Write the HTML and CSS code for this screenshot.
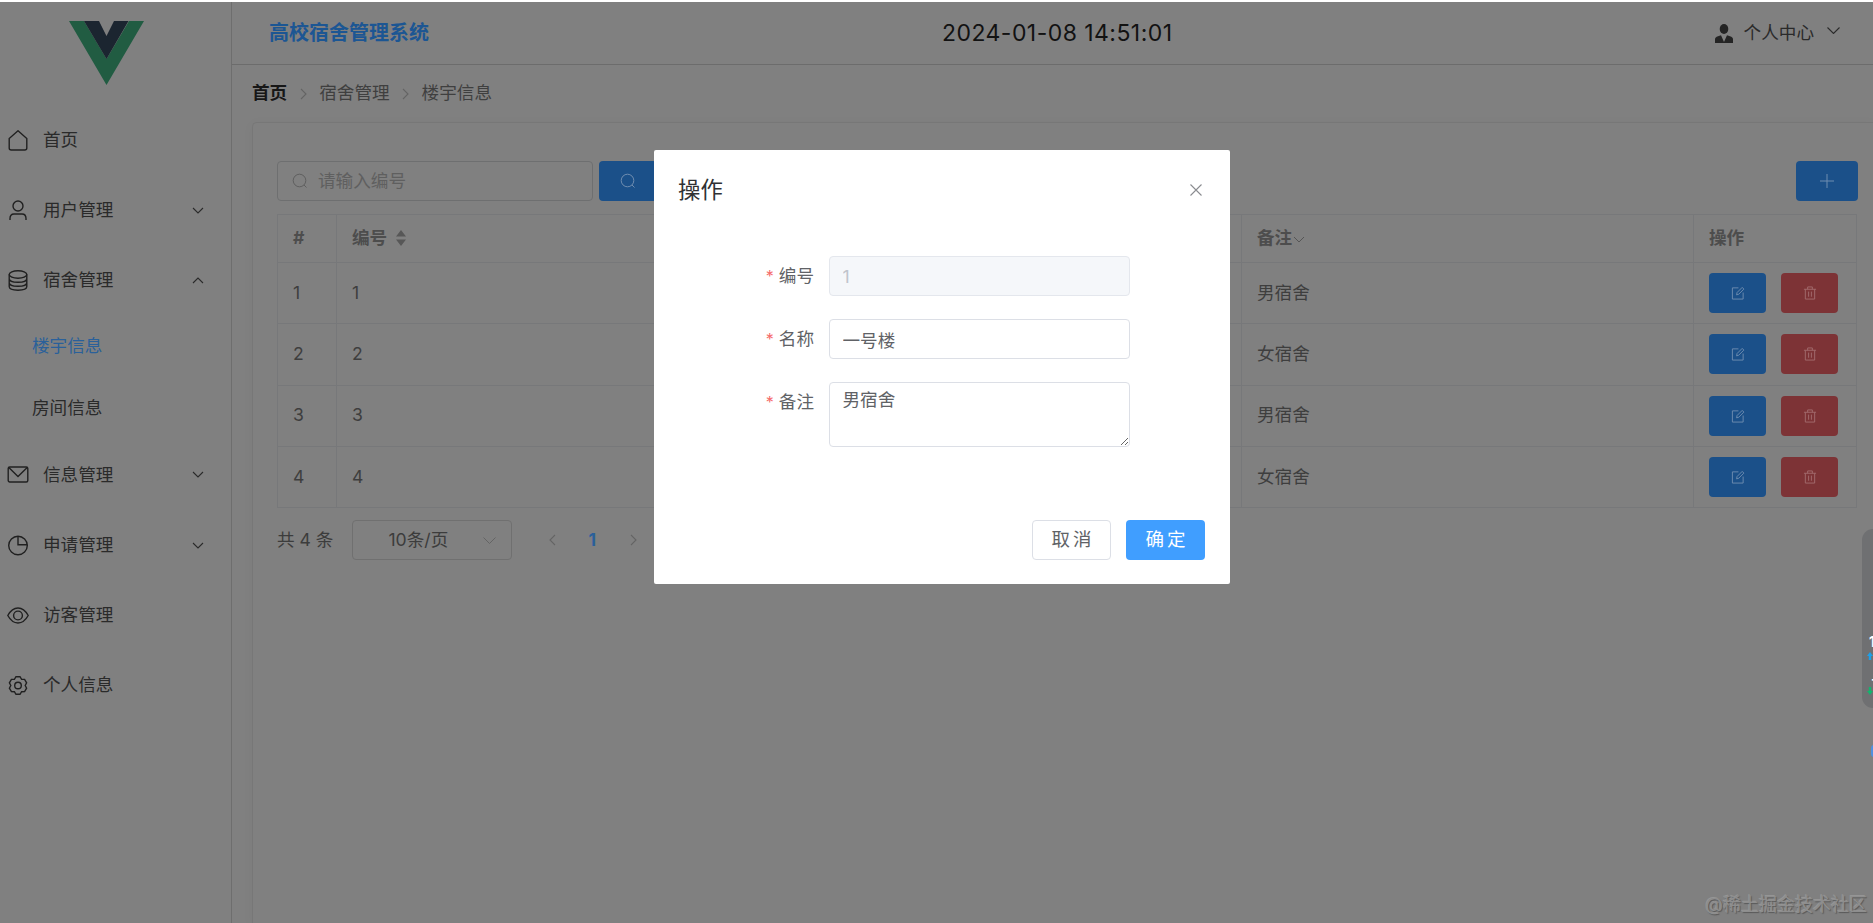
FILE: index.html
```html
<!DOCTYPE html>
<html lang="zh-CN">
<head>
<meta charset="utf-8">
<title>高校宿舍管理系统</title>
<link rel="stylesheet" href="styles.css">
</head>
<body>
<div class="app">
  <aside class="sidebar">
    <div class="logo">
      <svg width="75" height="64" viewBox="0 0 75 64"><path class="v-green" d="M0 0H15L37.5 38 60 0H75L37.5 64Z"/><path class="v-dark" d="M15 0H30L37.5 15 45 0H59.5L37.5 38Z"/></svg>
    </div>
    <nav class="menu">
      <a class="item"><svg class="ico" viewBox="0 0 22 21"><path d="M11 .8 19.800 8.500V18Q19.800 20 17.800 20H4.200Q2.200 20 2.200 18V8.500Z"/></svg><span>首页</span></a>
      <a class="item"><svg class="ico" viewBox="0 0 22 21"><circle cx="11" cy="6" r="5"/><path d="M3 20V18.500Q3 14 7 14H15Q19 14 19 18.500V20"/></svg><span>用户管理</span><svg class="chev" viewBox="0 0 12 7"><path d="M1 1 6 6 11 1"/></svg></a>
      <a class="item"><svg class="ico" viewBox="0 0 22 21"><ellipse cx="11" cy="4.500" rx="8.800" ry="3.700"/><path d="M2.200 4.500V16.500Q2.200 20.200 11 20.200T19.800 16.500V4.500M2.200 8.500Q2.200 12.300 11 12.300T19.800 8.500M2.200 12.500Q2.200 16.300 11 16.300T19.800 12.500"/></svg><span>宿舍管理</span><svg class="chev" viewBox="0 0 12 7"><path d="M1 6 6 1 11 6"/></svg></a>
      <a class="sub active">楼宇信息</a>
      <a class="sub">房间信息</a>
      <a class="item"><svg class="ico" viewBox="0 0 22 21"><rect x="1.200" y="3" width="19.600" height="15" rx="1.500"/><path d="M1.800 3.500 11 12.500 20.200 3.500"/></svg><span>信息管理</span><svg class="chev" viewBox="0 0 12 7"><path d="M1 1 6 6 11 1"/></svg></a>
      <a class="item"><svg class="ico" viewBox="0 0 22 21"><circle cx="11" cy="10.500" r="9.300"/><path d="M11 1.200V9.800H20.200"/></svg><span>申请管理</span><svg class="chev" viewBox="0 0 12 7"><path d="M1 1 6 6 11 1"/></svg></a>
      <a class="item"><svg class="ico" viewBox="0 0 22 21"><path d="M.8 10.500Q5 3 11 3T21.200 10.500Q17 18 11 18T.8 10.500Z"/><circle cx="11" cy="10.500" r="4.400"/></svg><span>访客管理</span></a>
      <a class="item"><svg class="ico" viewBox="-1 -.5 22 21"><polygon points="7.980,1.230 12.020,1.230 13.600,3.760 16.580,3.860 18.610,7.370 17.200,10 18.610,12.630 16.580,16.140 13.600,16.240 12.020,18.770 7.980,18.770 6.400,16.240 3.420,16.140 1.390,12.630 2.800,10 1.390,7.370 3.420,3.860 6.400,3.760"/><circle cx="10" cy="10" r="3.300"/></svg><span>个人信息</span></a>
    </nav>
  </aside>
  <main class="main">
    <header class="topbar">
      <h1 class="brand">高校宿舍管理系统</h1>
      <time class="clock">2024-01-08 14:51:01</time>
      <div class="user">
        <svg class="user-ico" viewBox="0 0 18 19"><ellipse cx="9" cy="5" rx="4.300" ry="5"/><path d="M0 19V15.500Q0 13 3 12.300L6 11.300 9 18 12 11.300 15 12.300Q18 13 18 15.500V19Z"/></svg>
        <span>个人中心</span>
        <svg class="user-chev" viewBox="0 0 13 7"><path d="M.5.500 6.500 6.500 12.500.500"/></svg>
      </div>
    </header>
    <div class="crumbs">
      <b>首页</b><svg class="sep" viewBox="0 0 7 12"><path d="M1 1 6 6 1 11"/></svg><span>宿舍管理</span><svg class="sep" viewBox="0 0 7 12"><path d="M1 1 6 6 1 11"/></svg><span>楼宇信息</span>
    </div>
    <section class="card">
      <div class="toolbar">
        <div class="search">
          <svg class="search-ico" viewBox="0 0 16 16"><circle cx="7.500" cy="7.500" r="6.300"/><path d="M12 12 14.500 14.500"/></svg>
          <span>请输入编号</span>
        </div>
        <button class="btn-blue btn-search"><svg class="btn-ico" viewBox="0 0 16 16"><circle cx="7.500" cy="7.500" r="6.300"/><path d="M12 12 14.500 14.500"/></svg></button>
        <button class="btn-blue btn-add"><svg class="btn-ico" viewBox="0 0 16 16"><path d="M8 1V15M1 8H15"/></svg></button>
      </div>
      <table class="grid">
        <colgroup><col class="c1"><col class="c2"><col class="c3"><col class="c4"><col class="c5"></colgroup>
        <thead>
          <tr><th>#</th><th>编号 <svg class="sort" viewBox="0 0 12 18"><path d="M6 1 11 7.500H1ZM6 17 1 10.500H11Z"/></svg></th><th>名称</th><th>备注<svg class="th-chev" viewBox="0 0 12 7"><path d="M1 1 6 6 11 1"/></svg></th><th>操作</th></tr>
        </thead>
        <tbody>
          <tr><td>1</td><td>1</td><td>一号楼</td><td>男宿舍</td><td class="ops"><button class="op op-edit"><svg viewBox="0 0 15 15"><path d="M8 2H1.500V14H13V7M6 9.500 6.500 7 12 1.500 13.800 3.300 8.300 8.800Z"/></svg></button><button class="op op-del"><svg viewBox="0 0 15 15"><path d="M1 3.500H14M5 3.500V1H10V3.500M2.500 3.500V14H12.500V3.500M6 6V11.500M9 6V11.500"/></svg></button></td></tr>
          <tr><td>2</td><td>2</td><td>二号楼</td><td>女宿舍</td><td class="ops"><button class="op op-edit"><svg viewBox="0 0 15 15"><path d="M8 2H1.500V14H13V7M6 9.500 6.500 7 12 1.500 13.800 3.300 8.300 8.800Z"/></svg></button><button class="op op-del"><svg viewBox="0 0 15 15"><path d="M1 3.500H14M5 3.500V1H10V3.500M2.500 3.500V14H12.500V3.500M6 6V11.500M9 6V11.500"/></svg></button></td></tr>
          <tr><td>3</td><td>3</td><td>三号楼</td><td>男宿舍</td><td class="ops"><button class="op op-edit"><svg viewBox="0 0 15 15"><path d="M8 2H1.500V14H13V7M6 9.500 6.500 7 12 1.500 13.800 3.300 8.300 8.800Z"/></svg></button><button class="op op-del"><svg viewBox="0 0 15 15"><path d="M1 3.500H14M5 3.500V1H10V3.500M2.500 3.500V14H12.500V3.500M6 6V11.500M9 6V11.500"/></svg></button></td></tr>
          <tr><td>4</td><td>4</td><td>四号楼</td><td>女宿舍</td><td class="ops"><button class="op op-edit"><svg viewBox="0 0 15 15"><path d="M8 2H1.500V14H13V7M6 9.500 6.500 7 12 1.500 13.800 3.300 8.300 8.800Z"/></svg></button><button class="op op-del"><svg viewBox="0 0 15 15"><path d="M1 3.500H14M5 3.500V1H10V3.500M2.500 3.500V14H12.500V3.500M6 6V11.500M9 6V11.500"/></svg></button></td></tr>
        </tbody>
      </table>
      <div class="pager">
        <span class="total">共 4 条</span>
        <div class="size"><span>10条/页</span><svg class="size-chev" viewBox="0 0 13 7"><path d="M.5.500 6.500 6.500 12.500.500"/></svg></div>
        <svg class="pg-arrow" viewBox="0 0 7 12"><path d="M6 1 1 6 6 11"/></svg>
        <b class="pg-num">1</b>
        <svg class="pg-arrow" viewBox="0 0 7 12"><path d="M1 1 6 6 1 11"/></svg>
      </div>
    </section>
  </main>
</div>

<div class="dialog">
  <div class="dialog-head">
    <h2>操作</h2>
    <svg class="close" viewBox="0 0 12 12"><path d="M.5.500 11.500 11.500M11.500.500 .5 11.500"/></svg>
  </div>
  <form class="form">
    <div class="row"><label class="lbl"><i>*</i>编号</label><input class="field" value="1" disabled></div>
    <div class="row"><label class="lbl"><i>*</i>名称</label><input class="field" value="一号楼"></div>
    <div class="row"><label class="lbl"><i>*</i>备注</label><textarea class="field area">男宿舍</textarea></div>
  </form>
  <div class="dialog-foot">
    <button class="btn btn-plain">取 消</button>
    <button class="btn btn-ok">确 定</button>
  </div>
</div>

<div class="float-widget">
  <span class="fw-num">1</span>
  <span class="fw-up"></span>
  <span class="fw-num fw-num2">-</span>
  <span class="fw-down"></span>
</div>
<span class="float-dot"></span>
<div class="watermark">@稀土掘金技术社区</div>
</body>
</html>
```
FILE: styles.css
```css
* { box-sizing: border-box; }
html, body { height: 100%; }
body {
  margin: 0;
  padding-top: 2px;
  height: 923px;
  overflow: hidden;
  position: relative;
  background: #fff;
  color: #3c3c3c;
  font: 400 17.6px/1.4 Inter, "Noto Sans CJK SC", sans-serif;
}
svg { display: block; fill: none; stroke: currentColor; stroke-width: 1.3; }
button { font: inherit; border: 0; padding: 0; }

.app { display: flex; height: 921px; background: #808080; }

/* sidebar */
.sidebar { flex: 0 0 232px; border-right: 1px solid #6e6e6e; color: #2a2a2a; }
.logo { height: 103px; padding: 19px 0 0 69px; }
.logo svg { stroke: none; }
.v-green { fill: #215c42; }
.v-dark { fill: #1b2530; }
.item { display: flex; align-items: center; height: 70.25px; padding: 0 27px 0 7px; }
.ico { width: 22px; height: 21px; margin-right: 14px; flex: none; stroke-width: 1.4; color: #202020; }
.chev { width: 12px; height: 7px; margin-left: auto; stroke-width: 1.1; }
.sub { display: flex; align-items: center; height: 62px; padding-left: 32px; }
.sub.active { color: #2a609a; }

/* main */
.main { flex: 1; min-width: 0; display: flex; flex-direction: column; }
.topbar { display: flex; align-items: center; height: 63px; padding: 0 33px 0 37px; border-bottom: 1px solid #6c6c6c; }
.brand { margin: 0; flex: 0 0 673px; font-size: 20px; font-weight: 700; color: #1c5693; }
.clock { font-size: 23px; letter-spacing: .45px; color: #121212; }
.user { margin-left: auto; display: flex; align-items: center; color: #2a2a2a; }
.user-ico { width: 18px; height: 19px; fill: #242424; stroke: none; margin-right: 11px; }
.user-chev { width: 13px; height: 7px; margin: 0 0 6px 13px; stroke-width: 1.1; }

.crumbs { display: flex; align-items: center; height: 57px; padding-left: 20px; color: #3f3f3f; }
.crumbs b { color: #171717; }
.sep { width: 7px; height: 12px; margin: 0 12.5px; color: #646464; stroke-width: 1.1; }

.card { flex: 1; margin-left: 20px; padding: 38px 15px 0 24px; border: 1px solid #777; border-width: 1px 0 0 1px; border-radius: 5px 0 0 0; box-shadow: 0 2px 12px rgba(0,0,0,.04); }
.toolbar { display: flex; height: 40px; margin-bottom: 13px; }
.search { flex: 0 0 316px; display: flex; align-items: center; padding-left: 14px; border: 1px solid #6e6f70; border-radius: 4px; color: #5f5f5f; }
.search-ico { width: 16px; height: 16px; margin-right: 10px; stroke-width: 1; }
.btn-blue { background: #1b5089; color: #6f8db0; border-radius: 4px; display: flex; align-items: center; justify-content: center; }
.btn-search { width: 58px; margin-left: 6px; }
.btn-add { width: 62px; margin-left: auto; }
.btn-ico { width: 16px; height: 16px; stroke-width: 1; }

.grid { width: 1579px; table-layout: fixed; border-collapse: collapse; }
.c1 { width: 59px; } .c2 { width: 453px; } .c3 { width: 452px; } .c4 { width: 452px; } .c5 { width: 163px; }
.grid th, .grid td { border: 1px solid #77787a; padding: 0 15px; text-align: left; }
.grid th { height: 48px; color: #4d4d4d; font-weight: 700; }
.grid td { height: 61.25px; color: #3e3e3e; }
.sort { display: inline-block; width: 12px; height: 18px; margin-left: 4px; vertical-align: -3px; fill: #575757; stroke: none; }
.th-chev { display: inline-block; width: 12px; height: 7px; margin-left: 1px; vertical-align: 1px; color: #555; stroke-width: 1; }
.grid td.ops { padding-right: 0; }
.op { display: inline-flex; align-items: center; justify-content: center; width: 57px; height: 40px; border-radius: 4px; vertical-align: middle; }
.op svg { width: 14px; height: 14px; stroke-width: 1; }
.op-edit { background: #1b5089; color: #6f8db0; }
.op-del { background: #7d3336; color: #a26c6e; margin-left: 15px; }

.pager { display: flex; align-items: center; height: 40px; margin-top: 12px; color: #3c3c3c; }
.size { display: flex; align-items: center; width: 160px; height: 40px; margin-left: 19px; padding: 0 15px 0 35px; border: 1px solid #707070; border-radius: 4px; }
.size-chev { width: 13px; height: 7px; margin-left: auto; color: #646464; stroke-width: 1; }
.pg-arrow { width: 7px; height: 12px; margin-left: 37px; color: #646464; stroke-width: 1.1; }
.pg-num { margin-left: 32px; color: #2a609a; }
.pg-num + .pg-arrow { margin-left: 34px; }

/* dialog */
.dialog { position: absolute; left: 654px; top: 150px; width: 576px; height: 434px; padding: 25px; background: #fff; border-radius: 2px; color: #606266; }
.dialog-head { display: flex; align-items: center; justify-content: space-between; height: 30px; }
.dialog-head h2 { margin: 0 0 0 -1px; font-size: 22.4px; font-weight: 400; color: #303133; }
.close { width: 12px; height: 12px; margin-right: 3px; color: #8a8c90; stroke-width: 1.1; }
.form { display: flex; flex-direction: column; gap: 23px; margin: 51px 0 73px; }
.row { display: flex; align-items: flex-start; }
.lbl { flex: 0 0 135px; display: flex; justify-content: flex-end; align-items: center; height: 40px; margin-right: 15px; }
.lbl i { font-style: normal; color: #f56c6c; margin-right: 5px; font-size: 16px; }
.field { width: 301px; height: 40px; padding: 0 12.5px; border: 1px solid #dcdfe6; border-radius: 4px; font: inherit; color: #606266; background: #fff; outline: 0; }
.field:disabled { background: #f5f7fa; border-color: #e4e7ed; color: #c0c4cc; }
.area { height: 65px; padding-top: 5px; line-height: 1.4; resize: vertical; display: block; }
.dialog-foot { display: flex; justify-content: flex-end; gap: 15px; }
.btn { width: 79px; height: 40px; border-radius: 4px; font-size: 18.5px; word-spacing: -2px; }
.btn-plain { background: #fff; border: 1px solid #dcdfe6; color: #606266; }
.btn-ok { background: #409eff; color: #fff; }

/* floating bits */
.float-widget { position: absolute; left: 1862px; top: 529px; width: 40px; height: 179px; border-radius: 11px; background: #6f7072; }
.fw-num { position: absolute; left: 7px; top: 105px; color: #fff; font-size: 14px; line-height: 16px; font-weight: 700; }
.fw-num2 { top: 142px; left: 9px; }
.fw-up, .fw-down { position: absolute; left: 5px; width: 6px; height: 8px; clip-path: polygon(50% 0, 100% 50%, 70% 50%, 70% 100%, 30% 100%, 30% 50%, 0 50%); }
.fw-up { top: 123px; background: #1e9fe8; }
.fw-down { top: 158px; background: #12b56e; transform: rotate(180deg); }
.float-dot { position: absolute; left: 1871px; top: 745px; width: 8px; height: 12px; border-radius: 3px; background: #4f8fe0; }
.watermark { position: absolute; right: 6px; top: 894px; font-size: 18px; line-height: 22px; color: #8e8e8e; text-shadow: 1px 1px 1px rgba(60,60,60,.6), -1px -1px 0 rgba(170,170,170,.5); white-space: nowrap; }
```
